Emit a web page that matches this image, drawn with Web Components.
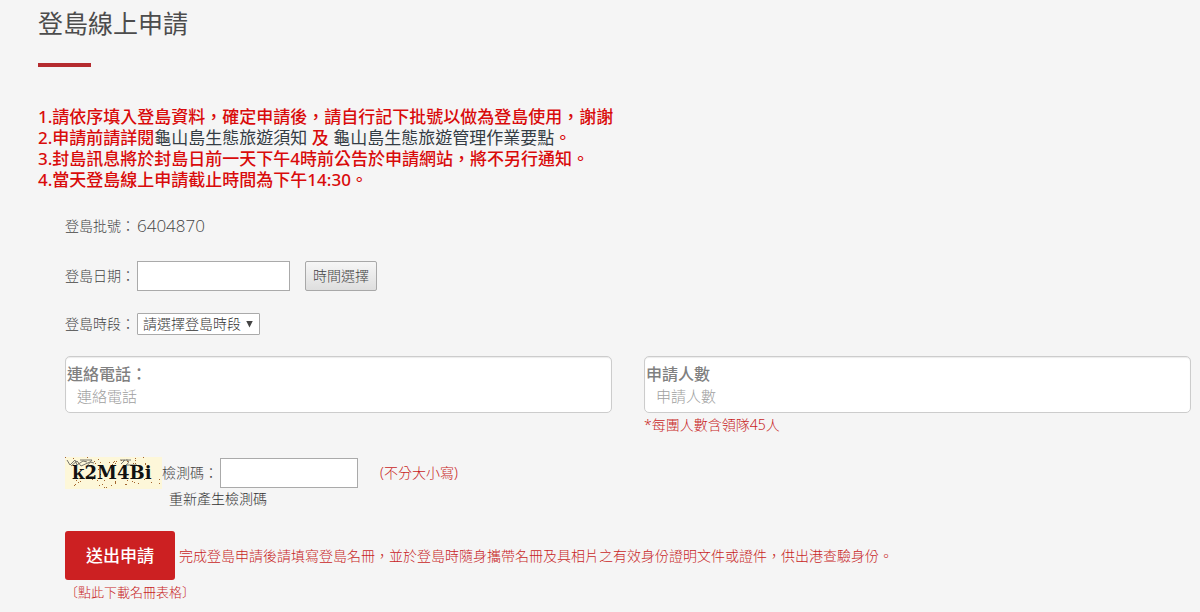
<!DOCTYPE html>
<html lang="zh-Hant">
<head>
<meta charset="utf-8">
<meta name="viewport" content="width=device-width, initial-scale=1">
<title>登島線上申請</title>
<style>
  body {
    margin: 0;
    background: #f5f5f5;
    color: #444;
    font-family: "Noto Sans", "Noto Sans CJK TC", sans-serif;
    font-size: 14px;
    font-weight: 300;
    line-height: 20px;
  }
</style>
</head>
<body>
<island-page>
  <page-title>登島線上申請</page-title>
  <notice-list></notice-list>
  <application-form batch="6404870"></application-form>
</island-page>

<script>
class IslandPage extends HTMLElement {
  constructor() {
    super();
    this.attachShadow({ mode: 'open' });
    this.shadowRoot.innerHTML = `
      <style>
        :host {
          display: block;
          padding: 7px 9px 8px 38px;
        }
      </style>
      <slot></slot>
    `;
  }
}

class PageTitle extends HTMLElement {
  constructor() {
    super();
    this.attachShadow({ mode: 'open' });
    this.shadowRoot.innerHTML = `
      <style>
        :host {
          display: block;
        }

        h1 {
          margin: 0;
          color: #4c4c4c;
          font-size: 25px;
          font-weight: 400;
          line-height: 32px;
        }

        h1::after {
          content: '';
          display: block;
          width: 53px;
          height: 4px;
          margin-top: 24px;
          background: #b52b2f;
        }
      </style>
      <h1><slot></slot></h1>
    `;
  }
}

class NoticeList extends HTMLElement {
  constructor() {
    super();
    this.attachShadow({ mode: 'open' });
    this.shadowRoot.innerHTML = `
      <style>
        :host {
          display: block;
          margin-top: 39px;
          color: #d90b0b;
          font-size: 17px;
          font-weight: 500;
          line-height: 21px;
        }

        p {
          margin: 0;
        }

        a {
          color: #343c44;
          font-weight: 400;
          text-decoration: none;
        }
      </style>
      <p>1.請依序填入登島資料，確定申請後，請自行記下批號以做為登島使用，謝謝</p>
      <p>2.申請前請詳閱<a href="#notice">龜山島生態旅遊須知</a> 及 <a href="#rules">龜山島生態旅遊管理作業要點</a>。</p>
      <p>3.封島訊息將於封島日前一天下午4時前公告於申請網站，將不另行通知。</p>
      <p>4.當天登島線上申請截止時間為下午14:30。</p>
    `;
  }
}

class FormRow extends HTMLElement {
  constructor() {
    super();
    this.attachShadow({ mode: 'open' });
    this.shadowRoot.innerHTML = `
      <style>
        :host {
          display: flex;
          align-items: center;
        }
      </style>
      <slot></slot>
    `;
  }
}

class InputPanel extends HTMLElement {
  connectedCallback() {
    const label = this.getAttribute('label');
    const hint = this.getAttribute('placeholder');
    this.attachShadow({ mode: 'open' });
    this.shadowRoot.innerHTML = `
      <style>
        :host {
          display: block;
        }

        .panel {
          box-sizing: border-box;
          height: 57px;
          padding: 6px 1px;
          border: 1px solid #ccc;
          border-radius: 5px;
          background: #fff;
          box-shadow: inset 0 1px 1px rgba(0, 0, 0, 0.08);
        }

        label {
          display: block;
          color: #808080;
          font-size: 16px;
          font-weight: 500;
          line-height: 22px;
        }

        input {
          display: block;
          box-sizing: border-box;
          width: 100%;
          height: 22px;
          padding: 0 10px;
          border: 0;
          outline: 0;
          background: transparent;
          color: #555;
          font: inherit;
          font-size: 15px;
        }

        input::placeholder {
          color: #a0a0a0;
        }
      </style>
      <div class="panel">
        <label for="field">${label}</label>
        <input id="field" type="text" placeholder="${hint}">
      </div>
      <slot></slot>
    `;
  }
}

class CaptchaImage extends HTMLElement {
  constructor() {
    super();
    this.attachShadow({ mode: 'open' });
  }

  connectedCallback() {
    this.shadowRoot.innerHTML = `
      <style>
        :host {
          display: block;
          width: 97px;
          height: 32px;
        }

        svg {
          display: block;
        }

        text {
          font-family: "DejaVu Serif", serif;
          font-size: 18px;
          font-weight: 700;
        }
      </style>
      <svg width="97" height="32" viewBox="0 0 97 32">
        <rect width="97" height="32" fill="#fdf7d9"/>
        <g fill="#a5662f">${this.speckles()}</g>
        <g fill="none" stroke="#77756c" stroke-width="1">
          <path d="M2 3l3 5 5-5 2 5 6-4 4 1M6 9l6-5 4 5 9-4 4 1M15 3h12l-5 6 5 1"/>
          <path d="M55 3h5l-4 4M58 4c5-3 8 1 3 4M61 3h5M62 8h10"/>
        </g>
        <text x="7" y="22" fill="#111">${this.getAttribute('code')}</text>
      </svg>
    `;
  }

  // scatter noise dots, mostly along the top and bottom edges
  speckles() {
    let seed = 17;
    const next = (max) => {
      seed = (seed * 1103 + 12345) % 65521;
      return seed % max;
    };
    let dots = '';
    for (let i = 0; i < 60; i++) {
      const y = i % 3 === 0 ? next(9) : i % 3 === 1 ? 22 + next(9) : next(31);
      dots += `<rect x="${next(96)}" y="${y}" width="1" height="1"/>`;
    }
    return dots;
  }
}

class ApplicationForm extends HTMLElement {
  connectedCallback() {
    this.attachShadow({ mode: 'open' });
    this.shadowRoot.innerHTML = `
      <style>
        :host {
          display: block;
          padding: 22px 0 0 27px;
        }

        a {
          color: inherit;
          text-decoration: none;
        }

        .label {
          width: 72px;
        }

        output {
          font-family: "Open Sans", "Noto Sans", sans-serif;
          font-size: 17px;
        }

        .box {
          box-sizing: border-box;
          width: 153px;
          height: 30px;
          padding: 0 6px;
          border: 1px solid #aaa;
          background: #fff;
          color: #555;
          font: inherit;
        }

        .box.code {
          width: 138px;
        }

        .pick {
          box-sizing: border-box;
          height: 30px;
          margin-left: 15px;
          padding: 0 7px;
          border: 1px solid #a8a8a8;
          border-radius: 2px;
          background: linear-gradient(#f6f6f6, #dedede);
          color: #444;
          font: inherit;
        }

        .select {
          display: grid;
          align-items: center;
        }

        .select > * {
          grid-area: 1 / 1;
        }

        select {
          appearance: none;
          box-sizing: border-box;
          height: 22px;
          padding: 0 18px 0 5px;
          border: 1px solid #aaa;
          border-radius: 1px;
          background: #fff;
          color: #333;
          font: inherit;
        }

        .arrow {
          justify-self: end;
          width: 7px;
          height: 7px;
          margin-right: 7px;
          background: #444;
          clip-path: polygon(0 0, 100% 0, 50% 100%);
          pointer-events: none;
        }

        .batch {
          height: 28px;
        }

        .date {
          margin-top: 21px;
        }

        .period {
          margin-top: 22px;
        }

        .panels {
          display: grid;
          grid-template-columns: 1fr 1fr;
          column-gap: 32px;
          margin-top: 21px;
        }

        .red {
          color: #c81e1e;
        }

        .limit {
          display: block;
          margin-top: 2px;
        }

        .check {
          margin-top: 22px;
        }

        .check label {
          width: 58px;
        }

        .check .red {
          margin-left: 22px;
        }

        .renew {
          display: block;
          margin-left: 104px;
          color: #333;
        }

        .send {
          margin-top: 22px;
        }

        .send button {
          flex: none;
          width: 110px;
          height: 49px;
          padding: 0;
          border: 0;
          border-radius: 3px;
          background: #cc2022;
          color: #fff;
          font: inherit;
          font-size: 17px;
          font-weight: 500;
        }

        .send .red {
          margin-left: 4px;
        }

        .download {
          display: block;
          margin-top: 2px;
          font-size: 13px;
        }
      </style>
      <form>
        <form-row class="batch">
          <label class="label" for="batch">登島批號：</label>
          <output id="batch">${this.getAttribute('batch')}</output>
        </form-row>
        <form-row class="date">
          <label class="label" for="date">登島日期：</label>
          <input class="box" id="date" type="text">
          <button class="pick" type="button">時間選擇</button>
        </form-row>
        <form-row class="period">
          <label class="label" for="period">登島時段：</label>
          <div class="select">
            <select id="period"><option>請選擇登島時段</option></select>
            <span class="arrow"></span>
          </div>
        </form-row>
        <div class="panels">
          <input-panel label="連絡電話：" placeholder="連絡電話"></input-panel>
          <input-panel label="申請人數" placeholder="申請人數">
            <span class="red limit">*每團人數含領隊45人</span>
          </input-panel>
        </div>
        <form-row class="check">
          <captcha-image code="k2M4Bi"></captcha-image>
          <label for="code">檢測碼：</label>
          <input class="box code" id="code" type="text">
          <span class="red">(不分大小寫)</span>
        </form-row>
        <a class="renew" href="#renew">重新產生檢測碼</a>
        <form-row class="send">
          <button type="button">送出申請</button>
          <span class="red">完成登島申請後請填寫登島名冊，並於登島時隨身攜帶名冊及具相片之有效身份證明文件或證件，供出港查驗身份。</span>
        </form-row>
        <a class="red download" href="#download">〔點此下載名冊表格〕</a>
      </form>
    `;
  }
}

customElements.define('island-page', IslandPage);
customElements.define('page-title', PageTitle);
customElements.define('notice-list', NoticeList);
customElements.define('form-row', FormRow);
customElements.define('input-panel', InputPanel);
customElements.define('captcha-image', CaptchaImage);
customElements.define('application-form', ApplicationForm);
</script>
</body>
</html>
